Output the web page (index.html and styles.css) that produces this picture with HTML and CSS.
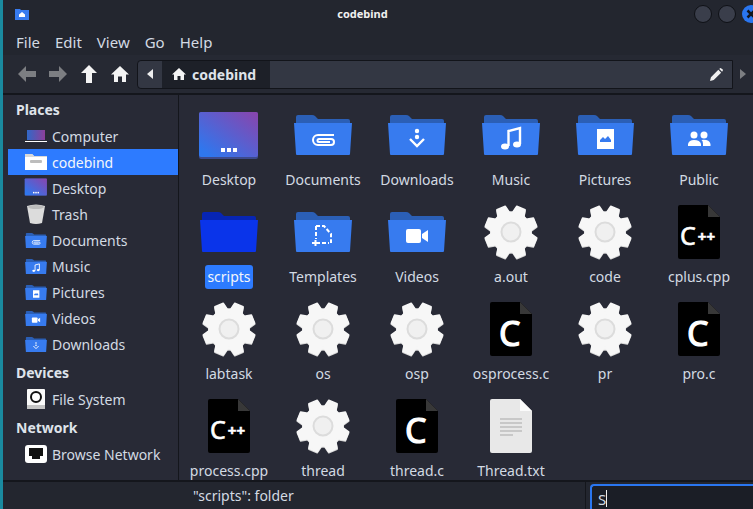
FILE: index.html
```html
<!DOCTYPE html>
<html lang="en">
<head>
    <meta charset="UTF-8">
    <title>codebind</title>
    <link rel="stylesheet" href="styles.css">
</head>
<body>
    <!-- shared icon parts -->
    <svg class="defs" aria-hidden="true">
        <defs>
            <linearGradient id="desk" x1="0" y1="1" x2="1" y2="0">
                <stop offset="0.1" stop-color="#2f77ee"/>
                <stop offset="1" stop-color="#8a44ac"/>
            </linearGradient>
            <g id="folder">
                <path d="M7 8H21Q23 8 24 9L27 12H57Q59 12 59 14V20H5V10Q5 8 7 8Z" fill="#2b5fb6"/>
                <path d="M3 16H61L59 47Q59 48 58 48H6Q5 48 5 47Z" fill="#377bef"/>
            </g>
            <g id="folder-dark">
                <path d="M7 8H21Q23 8 24 9L27 12H57Q59 12 59 14V20H5V10Q5 8 7 8Z" fill="#0725b4"/>
                <path d="M3 16H61L59 47Q59 48 58 48H6Q5 48 5 47Z" fill="#0a34ea"/>
            </g>
            <g id="g-doc" fill="none" stroke="#fff" stroke-width="2">
                <path d="M43 28H27A5 5 0 0 0 27 38H40A3 3 0 0 0 40 32H28A1.500 1.500 0 0 0 28 35H39"/>
            </g>
            <g id="g-down" fill="#fff">
                <circle cx="32" cy="24" r="2.2"/>
                <circle cx="32" cy="30" r="2.2"/>
                <path d="M25 32L32 39L39 32" fill="none" stroke="#fff" stroke-width="2.4"/>
            </g>
            <g id="g-music" fill="#fff">
                <path d="M29.500 39V24L41 21V37" fill="none" stroke="#fff" stroke-width="2.4"/>
                <ellipse cx="26" cy="39.500" rx="4" ry="3"/>
                <ellipse cx="38" cy="37.500" rx="4" ry="3"/>
            </g>
            <g id="g-pic">
                <rect x="24" y="22" width="17" height="20" fill="#fff"/>
                <path d="M27 33L30 30L32 32L35 29L38 33V35H27Z" fill="#377bef"/>
            </g>
            <g id="g-people" fill="#fff">
                <circle cx="27" cy="28" r="3.500"/>
                <circle cx="37" cy="28" r="3.500"/>
                <path d="M21 39V37Q22 33 27 33Q33 33 34 37V39Z"/>
                <path d="M36 39V37Q36 34 34.500 33Q42 32 43.500 37V39Z"/>
            </g>
            <g id="g-tpl" fill="none" stroke="#fff" stroke-width="2">
                <path d="M25 22V35M25 22H33L40 30V39M25 39H38" stroke-dasharray="4 2"/>
                <path d="M21 39H28M24.500 36V42"/>
            </g>
            <g id="g-video" fill="#fff">
                <rect x="21" y="25" width="15" height="14" rx="2"/>
                <path d="M37 30L43 26V38L37 34Z"/>
            </g>
            <g id="desktop">
                <rect x="2" y="1" width="59" height="47" rx="2" fill="#3d4a8c"/>
                <rect x="2" y="1" width="59" height="45" rx="2" fill="url(#desk)"/>
                <rect x="24" y="37" width="4" height="4" fill="#fff"/>
                <rect x="30" y="37" width="4" height="4" fill="#fff"/>
                <rect x="36" y="37" width="4" height="4" fill="#fff"/>
            </g>
            <path id="tooth" d="M-6 -19L-4.500 -26H4.500L6 -19V19L4.500 26H-4.500L-6 19Z"/>
            <g id="gear-shape" stroke-width="1.500" stroke-linejoin="round">
                <circle r="20"/>
                <use href="#tooth"/>
                <use href="#tooth" transform="rotate(45)"/>
                <use href="#tooth" transform="rotate(90)"/>
                <use href="#tooth" transform="rotate(135)"/>
            </g>
            <g id="gear">
                <use href="#gear-shape" transform="translate(32 29) rotate(22.5)" fill="#d6d6d6" stroke="#d6d6d6"/>
                <use href="#gear-shape" transform="translate(32 28) rotate(22.5)" fill="#f7f7f7" stroke="#f7f7f7"/>
                <circle cx="32" cy="28" r="9.500" fill="#f0f0f0" stroke="#dcdcdc" stroke-width="2"/>
            </g>
            <g id="sheet">
                <path d="M13 1H41L53 13V53Q53 55 51 55H13Q11 55 11 53V3Q11 1 13 1Z" fill="#000"/>
                <path d="M41 1L53 13H41Z" fill="#383838"/>
            </g>
        </defs>
    </svg>

    <div class="window">
        <header class="titlebar">
            <svg class="title-icon" viewBox="0 0 14 12"><path d="M0 1H5L6 2H14V12H0Z" fill="#377bef"/><path d="M7 4L10 6.500V9H4V6.500Z" fill="#fff"/></svg>
            <div class="title">codebind</div>
            <div class="wm-buttons">
                <span class="wm"></span>
                <span class="wm"></span>
                <span class="wm wm-close">
                    <svg viewBox="0 0 18 18" width="18" height="18"><path d="M5.500 5.500L12.500 12.500M12.500 5.500L5.500 12.500" stroke="#12151c" stroke-width="2.500"/></svg>
                </span>
            </div>
        </header>

        <nav class="menubar">
            <span>File</span><span>Edit</span><span>View</span><span>Go</span><span>Help</span>
        </nav>

        <div class="toolbar">
            <span class="tool"><svg viewBox="0 0 18 16" width="18" height="16"><path d="M0 8L8 0V5H18V11H8V16Z" fill="#7c7e82"/></svg></span>
            <span class="tool"><svg viewBox="0 0 18 16" width="18" height="16"><path d="M18 8L10 0V5H0V11H10V16Z" fill="#7c7e82"/></svg></span>
            <span class="tool"><svg viewBox="0 0 16 18" width="16" height="18"><path d="M8 0L16 8H11V18H5V8H0Z" fill="#f4f4f4"/></svg></span>
            <span class="tool"><svg viewBox="0 0 18 16" width="18" height="16"><path d="M9 0L18 8.500H15V16H11V10.500H7V16H3V8.500H0Z" fill="#f4f4f4"/></svg></span>

            <div class="pathbar">
                <span class="path-back"><svg viewBox="0 0 6 10" width="6" height="10"><path d="M6 0V10L0 5Z" fill="#eee"/></svg></span>
                <span class="path-current">
                    <svg viewBox="0 0 14 12" width="14" height="12"><path d="M7 0L14 6.500H12V12H8.500V8H5.500V12H2V6.500H0Z" fill="#f4f4f4"/></svg>
                    codebind
                </span>
                <span class="path-rest">
                    <svg viewBox="0 0 14 14" width="13" height="13"><path d="M0 14L1 10L9 2L12 5L4 13ZM10 1L11 0Q12 0 14 2Q14 3 13 4Z" fill="#f0f0f0"/></svg>
                </span>
            </div>
            <span class="path-next"><svg viewBox="0 0 6 10" width="6" height="10"><path d="M0 0V10L6 5Z" fill="#7c7e82"/></svg></span>
        </div>

        <div class="content">
            <aside class="sidebar">
                <h4>Places</h4>
                <div class="place">
                    <svg viewBox="0 0 24 20" width="24" height="20"><defs><linearGradient id="lap" x1="0" y1="0" x2="1" y2="0"><stop offset="0" stop-color="#3068c8"/><stop offset="1" stop-color="#8d3f9a"/></linearGradient></defs><rect x="3" y="4" width="18" height="10" fill="url(#lap)"/><rect x="1" y="15" width="22" height="1" fill="#fff"/></svg>
                    Computer
                </div>
                <div class="place selected">
                    <svg viewBox="0 0 24 20" width="24" height="20"><path d="M1 2H8L10 4H23V18H1Z" fill="#fff"/><path d="M1 2H8L10 4H23V5H1Z" fill="#d8d8d8"/><rect x="6" y="8" width="12" height="3" rx="1" fill="#bdbdbd"/></svg>
                    codebind
                </div>
                <div class="place">
                    <svg viewBox="0 0 64 56" width="24" height="21"><use href="#desktop"/></svg>
                    Desktop
                </div>
                <div class="place">
                    <svg viewBox="0 0 24 22" width="24" height="22"><path d="M3 3Q12 0 21 3L18 20Q12 22 6 20Z" fill="#dcdcdc"/><ellipse cx="12" cy="4" rx="8" ry="2" fill="#bdbdbd"/></svg>
                    Trash
                </div>
                <div class="place">
                    <svg viewBox="0 0 64 56" width="24" height="21"><use href="#folder"/><use href="#g-doc"/></svg>
                    Documents
                </div>
                <div class="place">
                    <svg viewBox="0 0 64 56" width="24" height="21"><use href="#folder"/><use href="#g-music"/></svg>
                    Music
                </div>
                <div class="place">
                    <svg viewBox="0 0 64 56" width="24" height="21"><use href="#folder"/><use href="#g-pic"/></svg>
                    Pictures
                </div>
                <div class="place">
                    <svg viewBox="0 0 64 56" width="24" height="21"><use href="#folder"/><use href="#g-video"/></svg>
                    Videos
                </div>
                <div class="place">
                    <svg viewBox="0 0 64 56" width="24" height="21"><use href="#folder"/><use href="#g-down"/></svg>
                    Downloads
                </div>
                <h4>Devices</h4>
                <div class="place">
                    <svg viewBox="0 0 24 22" width="24" height="22"><rect x="3" y="1" width="18" height="20" rx="1" fill="#fafafa"/><rect x="3" y="17" width="18" height="4" fill="#c4c4c4"/><circle cx="12" cy="9" r="5" fill="#fff" stroke="#111" stroke-width="2"/></svg>
                    File System
                </div>
                <h4>Network</h4>
                <div class="place">
                    <svg viewBox="0 0 24 20" width="24" height="20"><rect x="1" y="1" width="22" height="18" rx="3" fill="#fff"/><path d="M5 4H19V12H16V15H8V12H5Z" fill="#111"/></svg>
                    Browse Network
                </div>
            </aside>

            <main class="files">
                <div class="file"><svg class="icon" viewBox="0 0 64 56"><use href="#desktop" y="4"/></svg><span class="name">Desktop</span></div>
                <div class="file"><svg class="icon" viewBox="0 0 64 56"><use href="#folder"/><use href="#g-doc"/></svg><span class="name">Documents</span></div>
                <div class="file"><svg class="icon" viewBox="0 0 64 56"><use href="#folder"/><use href="#g-down"/></svg><span class="name">Downloads</span></div>
                <div class="file"><svg class="icon" viewBox="0 0 64 56"><use href="#folder"/><use href="#g-music"/></svg><span class="name">Music</span></div>
                <div class="file"><svg class="icon" viewBox="0 0 64 56"><use href="#folder"/><use href="#g-pic"/></svg><span class="name">Pictures</span></div>
                <div class="file"><svg class="icon" viewBox="0 0 64 56"><use href="#folder"/><use href="#g-people"/></svg><span class="name">Public</span></div>

                <div class="file"><svg class="icon" viewBox="0 0 64 56"><use href="#folder-dark"/></svg><span class="name picked">scripts</span></div>
                <div class="file"><svg class="icon" viewBox="0 0 64 56"><use href="#folder"/><use href="#g-tpl"/></svg><span class="name">Templates</span></div>
                <div class="file"><svg class="icon" viewBox="0 0 64 56"><use href="#folder"/><use href="#g-video"/></svg><span class="name">Videos</span></div>
                <div class="file"><svg class="icon" viewBox="0 0 64 56"><use href="#gear"/></svg><span class="name">a.out</span></div>
                <div class="file"><svg class="icon" viewBox="0 0 64 56"><use href="#gear"/></svg><span class="name">code</span></div>
                <div class="file"><svg class="icon" viewBox="0 0 64 56"><use href="#sheet"/><text class="cpp" x="13" y="41">C<tspan class="plus" dx="2" dy="-3">++</tspan></text></svg><span class="name">cplus.cpp</span></div>

                <div class="file"><svg class="icon" viewBox="0 0 64 56"><use href="#gear"/></svg><span class="name">labtask</span></div>
                <div class="file"><svg class="icon" viewBox="0 0 64 56"><use href="#gear"/></svg><span class="name">os</span></div>
                <div class="file"><svg class="icon" viewBox="0 0 64 56"><use href="#gear"/></svg><span class="name">osp</span></div>
                <div class="file"><svg class="icon" viewBox="0 0 64 56"><use href="#sheet"/><text class="c" x="20" y="45">C</text></svg><span class="name">osprocess.c</span></div>
                <div class="file"><svg class="icon" viewBox="0 0 64 56"><use href="#gear"/></svg><span class="name">pr</span></div>
                <div class="file"><svg class="icon" viewBox="0 0 64 56"><use href="#sheet"/><text class="c" x="20" y="45">C</text></svg><span class="name">pro.c</span></div>

                <div class="file"><svg class="icon" viewBox="0 0 64 56"><use href="#sheet"/><text class="cpp" x="13" y="41">C<tspan class="plus" dx="2" dy="-3">++</tspan></text></svg><span class="name">process.cpp</span></div>
                <div class="file"><svg class="icon" viewBox="0 0 64 56"><use href="#gear"/></svg><span class="name">thread</span></div>
                <div class="file"><svg class="icon" viewBox="0 0 64 56"><use href="#sheet"/><text class="c" x="20" y="45">C</text></svg><span class="name">thread.c</span></div>
                <div class="file"><svg class="icon" viewBox="0 0 64 56">
                    <path d="M13 1H41L53 13V53Q53 55 51 55H13Q11 55 11 53V3Q11 1 13 1Z" fill="#e8e8e8"/>
                    <path d="M41 1L53 13H41Z" fill="#fbfbfb"/>
                    <path d="M21 21H43M21 25H43M21 29H43M21 33H43M21 37H34" stroke="#a8a8a8" stroke-width="1"/>
                </svg><span class="name">Thread.txt</span></div>
            </main>
        </div>

        <footer class="statusbar">
            <div class="status-text">"scripts": folder</div>
            <div class="search"><span class="typed">S</span><span class="caret"></span></div>
        </footer>
    </div>
</body>
</html>
```

FILE: styles.css
```css
* {
    box-sizing: border-box;
}

html, body {
    margin: 0;
    width: 753px;
    height: 509px;
    overflow: hidden;
    background-color: #1a8a9f;
}

body {
    padding-left: 3px;
    font-family: "Noto Sans", sans-serif;
    font-size: 14px;
    color: #d3dae3;
}

.defs {
    position: absolute;
    width: 0;
    height: 0;
}

.window {
    height: 509px;
    display: flex;
    flex-direction: column;
    background-color: #23262f;
}

/* title bar */
.titlebar {
    height: 28px;
    flex: none;
    display: flex;
    align-items: center;
    padding-left: 12px;
}

.title-icon {
    width: 14px;
    height: 12px;
    flex: none;
}

.title {
    flex: 1;
    padding-left: 2px;
    padding-bottom: 1px;
    text-align: center;
    font-size: 11px;
    font-weight: bold;
    color: #f0f0f0;
}

.wm-buttons {
    display: flex;
    gap: 6px;
    margin-right: -7px;
    flex: none;
}

.wm {
    width: 18px;
    height: 18px;
    border-radius: 50%;
    background-color: #3a3e4b;
    border: 1px solid #0f1116;
}

.wm-close {
    background-color: #2a76f0;
    border: none;
}

.wm-close svg {
    display: block;
}

/* menu */
.menubar {
    height: 27px;
    flex: none;
    display: flex;
    align-items: center;
    gap: 15px;
    padding-left: 13px;
    font-size: 15px;
}

/* toolbar */
.toolbar {
    height: 38px;
    flex: none;
    display: flex;
    align-items: center;
    padding-left: 8px;
    background-color: #262933;
}

.tool {
    width: 31px;
    height: 28px;
    display: flex;
    align-items: center;
    justify-content: center;
}

.pathbar {
    flex: 1;
    height: 29px;
    margin-left: 2px;
    display: flex;
    border: 1px solid #12141a;
    border-radius: 4px 0 0 4px;
}

.path-back {
    width: 24px;
    display: flex;
    align-items: center;
    justify-content: center;
    background-color: #333743;
    border-radius: 4px 0 0 4px;
}

.path-current {
    width: 108px;
    display: flex;
    align-items: center;
    gap: 6px;
    padding-left: 10px;
    font-weight: bold;
    background-color: #1d2028;
    color: #dfe3ea;
}

.path-rest {
    flex: 1;
    display: flex;
    align-items: center;
    justify-content: flex-end;
    padding-right: 9px;
    background-color: #333743;
}

.path-next {
    width: 20px;
    display: flex;
    align-items: center;
    justify-content: center;
}

/* sidebar and file view */
.content {
    flex: 1;
    min-height: 0;
    display: flex;
    border-top: 2px solid #14161c;
    background-color: #282a36;
    overflow: hidden;
}

.sidebar {
    width: 171px;
    flex: none;
    margin-left: 5px;
    border-right: 1px solid #14161c;
}

.sidebar h4 {
    margin: 0;
    height: 29px;
    line-height: 31px;
    padding-left: 8px;
    font-size: 14px;
    font-weight: bold;
    color: #dfe3ea;
}

.sidebar h4:first-child {
    height: 28px;
    line-height: 30px;
}

.place {
    height: 26px;
    display: flex;
    align-items: center;
    gap: 4px;
    padding-left: 16px;
}

.place svg {
    flex: none;
}

.place.selected {
    background-color: #2d7bff;
    color: #f4f6fa;
}

.files {
    flex: 1;
    padding: 12px 0 0 3px;
    display: grid;
    grid-template-columns: repeat(6, 94px);
    grid-auto-rows: 97px;
}

.file {
    display: flex;
    flex-direction: column;
    align-items: center;
}

.icon {
    width: 64px;
    height: 56px;
    flex: none;
    margin-bottom: 7px;
}

.name {
    line-height: 20px;
    white-space: nowrap;
}

.name.picked {
    margin-top: -2px;
    padding: 2px 2px;
    background-color: #2d7bff;
    border-radius: 3px;
    color: #f4f6fa;
}

.cpp {
    font-family: "Noto Sans", sans-serif;
    font-size: 25px;
    fill: #fff;
    stroke: #fff;
    stroke-width: 0.6px;
}

.plus {
    font-size: 15px;
    font-weight: bold;
}

.c {
    font-family: "Noto Sans", sans-serif;
    font-size: 34px;
    fill: #fff;
    stroke: #fff;
    stroke-width: 1.2px;
}

/* bottom bar */
.statusbar {
    height: 29px;
    flex: none;
    display: flex;
    border-top: 2px solid #14161c;
    background-color: #23262f;
}

.status-text {
    width: 583px;
    padding-left: 190px;
    line-height: 27px;
    border-right: 1px solid #14161c;
}

.search {
    flex: 1;
    margin: 2px 0 -4px 4px;
    padding-left: 6px;
    display: flex;
    align-items: center;
    border: 2px solid #2a76f0;
    border-right: none;
    border-radius: 4px 0 0 0;
    background-color: #1b1e26;
}

.typed {
    font-size: 15px;
}

.caret {
    width: 1px;
    height: 17px;
    background-color: #f0f0f0;
}
```
